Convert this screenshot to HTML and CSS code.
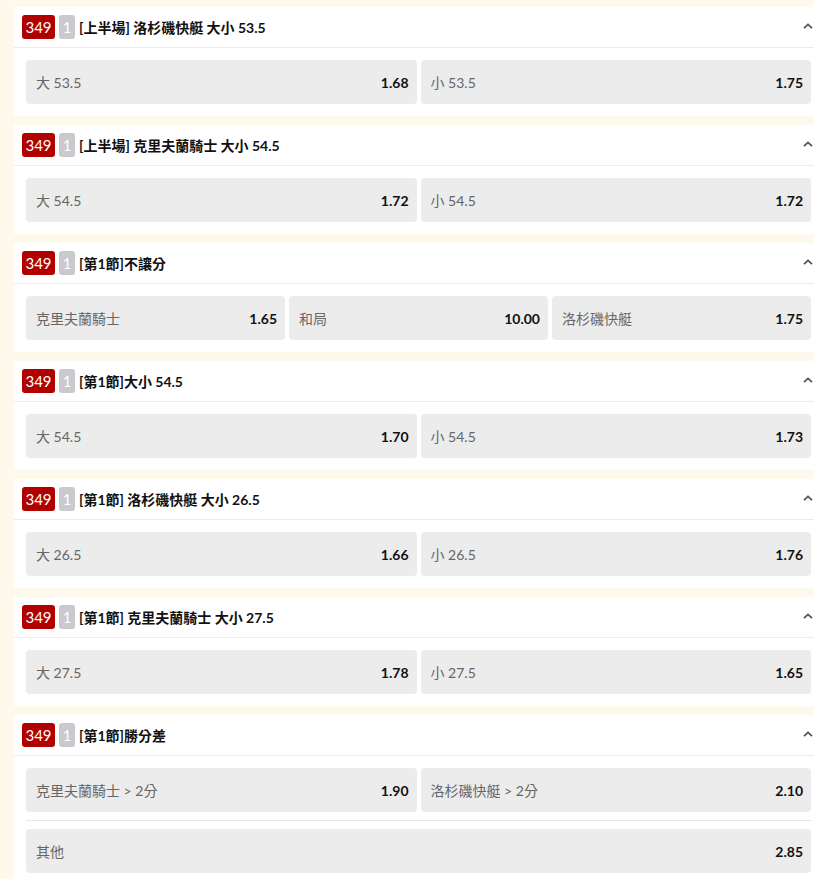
FILE: index.html
```html
<!DOCTYPE html>
<html lang="zh-Hant">
<head>
<meta charset="utf-8">
<link rel="stylesheet" href="styles.css">
</head>
<body>
<div class="list">

  <section class="card">
    <header class="card-head">
      <span class="badge-red">349</span><span class="badge-gray">1</span>
      <span class="title">[上半場] 洛杉磯快艇 大小 53.5</span>
      <svg class="chev" width="10" height="6" viewBox="0 0 10 6"><path d="M1 5.2 L5 1.4 L9 5.2" fill="none" stroke="#555" stroke-width="1.8"/></svg>
    </header>
    <div class="card-body">
      <div class="row cols-2">
        <div class="odd"><span class="lbl">大 53.5</span><span class="val">1.68</span></div>
        <div class="odd"><span class="lbl">小 53.5</span><span class="val">1.75</span></div>
      </div>
    </div>
  </section>

  <section class="card">
    <header class="card-head">
      <span class="badge-red">349</span><span class="badge-gray">1</span>
      <span class="title">[上半場] 克里夫蘭騎士 大小 54.5</span>
      <svg class="chev" width="10" height="6" viewBox="0 0 10 6"><path d="M1 5.2 L5 1.4 L9 5.2" fill="none" stroke="#555" stroke-width="1.8"/></svg>
    </header>
    <div class="card-body">
      <div class="row cols-2">
        <div class="odd"><span class="lbl">大 54.5</span><span class="val">1.72</span></div>
        <div class="odd"><span class="lbl">小 54.5</span><span class="val">1.72</span></div>
      </div>
    </div>
  </section>

  <section class="card">
    <header class="card-head">
      <span class="badge-red">349</span><span class="badge-gray">1</span>
      <span class="title">[第1節]不讓分</span>
      <svg class="chev" width="10" height="6" viewBox="0 0 10 6"><path d="M1 5.2 L5 1.4 L9 5.2" fill="none" stroke="#555" stroke-width="1.8"/></svg>
    </header>
    <div class="card-body">
      <div class="row cols-3">
        <div class="odd"><span class="lbl">克里夫蘭騎士</span><span class="val">1.65</span></div>
        <div class="odd"><span class="lbl">和局</span><span class="val">10.00</span></div>
        <div class="odd"><span class="lbl">洛杉磯快艇</span><span class="val">1.75</span></div>
      </div>
    </div>
  </section>

  <section class="card">
    <header class="card-head">
      <span class="badge-red">349</span><span class="badge-gray">1</span>
      <span class="title">[第1節]大小 54.5</span>
      <svg class="chev" width="10" height="6" viewBox="0 0 10 6"><path d="M1 5.2 L5 1.4 L9 5.2" fill="none" stroke="#555" stroke-width="1.8"/></svg>
    </header>
    <div class="card-body">
      <div class="row cols-2">
        <div class="odd"><span class="lbl">大 54.5</span><span class="val">1.70</span></div>
        <div class="odd"><span class="lbl">小 54.5</span><span class="val">1.73</span></div>
      </div>
    </div>
  </section>

  <section class="card">
    <header class="card-head">
      <span class="badge-red">349</span><span class="badge-gray">1</span>
      <span class="title">[第1節] 洛杉磯快艇 大小 26.5</span>
      <svg class="chev" width="10" height="6" viewBox="0 0 10 6"><path d="M1 5.2 L5 1.4 L9 5.2" fill="none" stroke="#555" stroke-width="1.8"/></svg>
    </header>
    <div class="card-body">
      <div class="row cols-2">
        <div class="odd"><span class="lbl">大 26.5</span><span class="val">1.66</span></div>
        <div class="odd"><span class="lbl">小 26.5</span><span class="val">1.76</span></div>
      </div>
    </div>
  </section>

  <section class="card">
    <header class="card-head">
      <span class="badge-red">349</span><span class="badge-gray">1</span>
      <span class="title">[第1節] 克里夫蘭騎士 大小 27.5</span>
      <svg class="chev" width="10" height="6" viewBox="0 0 10 6"><path d="M1 5.2 L5 1.4 L9 5.2" fill="none" stroke="#555" stroke-width="1.8"/></svg>
    </header>
    <div class="card-body">
      <div class="row cols-2">
        <div class="odd"><span class="lbl">大 27.5</span><span class="val">1.78</span></div>
        <div class="odd"><span class="lbl">小 27.5</span><span class="val">1.65</span></div>
      </div>
    </div>
  </section>

  <section class="card">
    <header class="card-head">
      <span class="badge-red">349</span><span class="badge-gray">1</span>
      <span class="title">[第1節]勝分差</span>
      <svg class="chev" width="10" height="6" viewBox="0 0 10 6"><path d="M1 5.2 L5 1.4 L9 5.2" fill="none" stroke="#555" stroke-width="1.8"/></svg>
    </header>
    <div class="card-body">
      <div class="row cols-2">
        <div class="odd"><span class="lbl">克里夫蘭騎士 &gt; 2分</span><span class="val">1.90</span></div>
        <div class="odd"><span class="lbl">洛杉磯快艇 &gt; 2分</span><span class="val">2.10</span></div>
      </div>
      <div class="divider"></div>
      <div class="row cols-1">
        <div class="odd"><span class="lbl">其他</span><span class="val">2.85</span></div>
      </div>
    </div>
  </section>

</div>
</body>
</html>
```

FILE: styles.css
```css
html, body {
  margin: 0;
  padding: 0;
}
body {
  background: #fdf9ec;
  font-family: Lato, "Noto Sans CJK TC", sans-serif;
  font-size: 14px;
  overflow: hidden;
}
.list {
  padding: 7px 0 0 14px;
  display: flex;
  flex-direction: column;
  gap: 9px;
}
.card {
  width: 809px;
  background: #fff;
}
.card-head {
  height: 41px;
  box-sizing: border-box;
  border-bottom: 1px solid #ececec;
  display: flex;
  align-items: center;
  padding: 0 8px 0 8px;
}
.badge-red {
  background: #b00000;
  color: #fff;
  border-radius: 3px;
  height: 24px;
  width: 33px;
  display: inline-flex;
  align-items: center;
  justify-content: center;
  font-size: 15px;
  margin-right: 4px;
}
.badge-gray {
  background: #c9c9ce;
  color: #fff;
  border-radius: 3px;
  height: 24px;
  width: 16px;
  display: inline-flex;
  align-items: center;
  justify-content: center;
  font-size: 15px;
  margin-right: 4px;
}
.title {
  font-weight: 700;
  color: #111;
  font-size: 14px;
  flex: 1;
}
.chev {
  margin-right: 2px;
  margin-top: -2px;
}
.card-body {
  padding: 12px;
}
.row {
  display: grid;
  gap: 4px;
}
.cols-1 { grid-template-columns: 1fr; }
.cols-2 { grid-template-columns: 1fr 1fr; }
.cols-3 { grid-template-columns: 1fr 1fr 1fr; }
.odd {
  height: 44px;
  background: #ececec;
  border-radius: 4px;
  display: flex;
  align-items: center;
  justify-content: space-between;
  padding: 0 8px 0 10px;
}
.lbl {
  color: #666;
}
.val {
  color: #111;
  font-weight: 700;
}
.divider {
  height: 1px;
  background: #e6e6e6;
  margin: 8px 0;
}
```
